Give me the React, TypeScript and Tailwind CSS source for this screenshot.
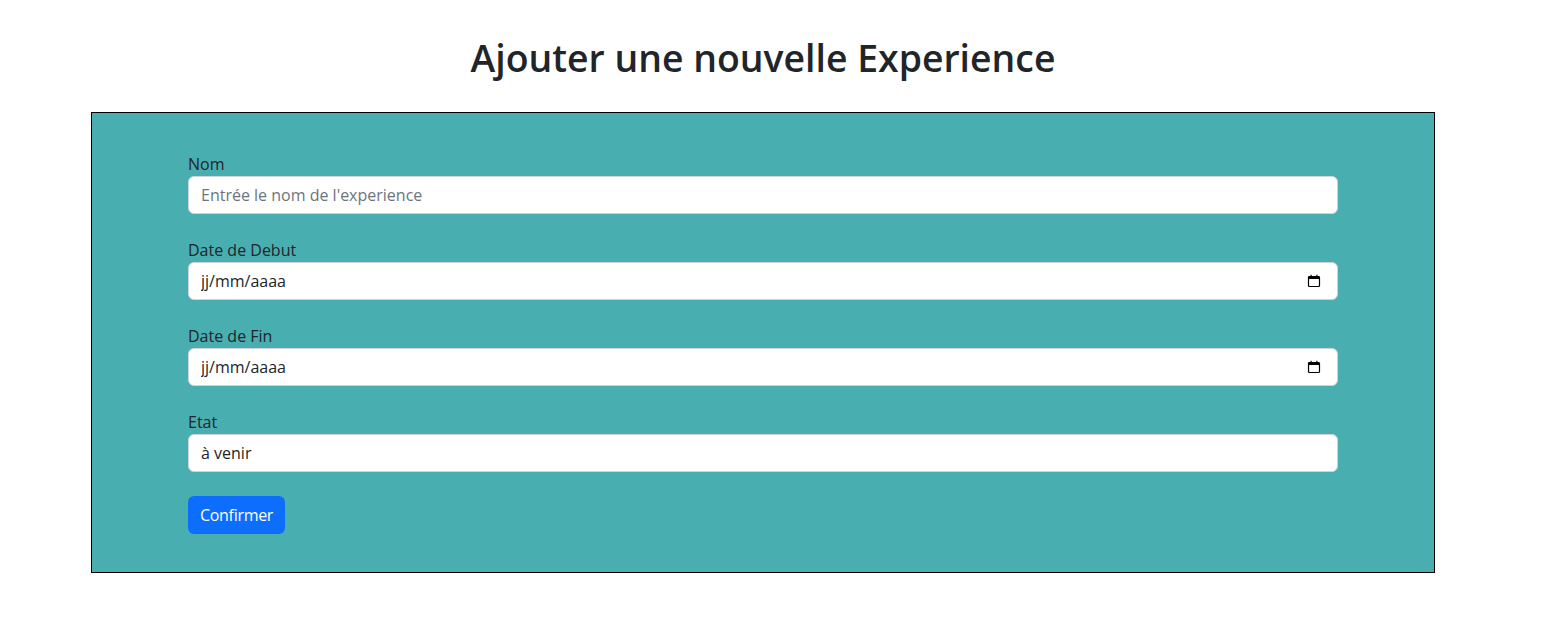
import { useState } from "react";

/* ── small calendar glyph like the native date picker ── */
const CalendarIcon = () => (
  <svg width="14" height="14" viewBox="0 0 14 14" fill="none" className="text-black">
    <rect x="1.5" y="2.5" width="11" height="10" rx="1" stroke="currentColor" strokeWidth="1.2" />
    <rect x="1.5" y="2.5" width="11" height="2.5" fill="currentColor" />
    <rect x="3.5" y="0.8" width="1.2" height="2.5" fill="currentColor" />
    <rect x="9.3" y="0.8" width="1.2" height="2.5" fill="currentColor" />
  </svg>
);

const inputClass =
  "w-full h-[38px] rounded-[6px] border border-[#ced4da] bg-white px-3 text-base text-[#212529] placeholder:text-[#6c757d] outline-none";

const Field = ({ label, children }: { label: string; children: React.ReactNode }) => (
  <div className="mb-6">
    <label className="block text-base leading-6 text-[#212529]">{label}</label>
    {children}
  </div>
);

const DateField = ({ label }: { label: string }) => (
  <Field label={label}>
    <div className="relative">
      <input type="text" readOnly value="jj/mm/aaaa" className={inputClass} />
      <span className="absolute right-[17px] top-1/2 -translate-y-1/2 flex">
        <CalendarIcon />
      </span>
    </div>
  </Field>
);

export default function App() {
  const [nom, setNom] = useState("");
  const [etat, setEtat] = useState("à venir");

  return (
    <div className="min-h-screen bg-white font-['Open_Sans',sans-serif] text-[#212529]">
      <div className="w-[1344px] ml-[91px]">
        <h1 className="pt-[36px] mb-[31px] text-center text-[37.4px] leading-[1.2] font-semibold text-[#212529]">
          Ajouter une nouvelle Experience
        </h1>

        <form
          className="border border-black bg-[#48aeb0] px-[96px] pt-[39px] pb-[38px]"
          onSubmit={(e) => e.preventDefault()}
        >
          <Field label="Nom">
            <input
              type="text"
              value={nom}
              onChange={(e) => setNom(e.target.value)}
              placeholder="Entrée le nom de l'experience"
              className={inputClass}
            />
          </Field>

          <DateField label="Date de Debut" />
          <DateField label="Date de Fin" />

          <Field label="Etat">
            <input
              type="text"
              value={etat}
              onChange={(e) => setEtat(e.target.value)}
              className={inputClass}
            />
          </Field>

          <button
            type="submit"
            className="h-[38px] rounded-[6px] bg-[#0d6efd] px-3 text-base tracking-[-0.3px] text-white"
          >
            Confirmer
          </button>
        </form>
      </div>
    </div>
  );
}
